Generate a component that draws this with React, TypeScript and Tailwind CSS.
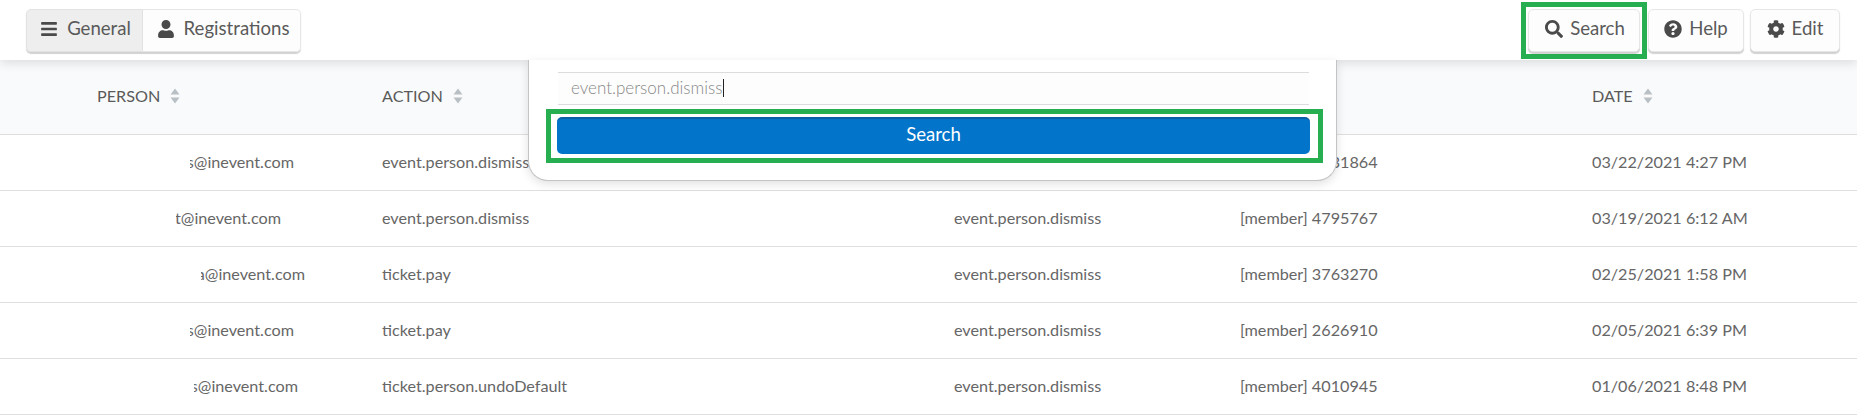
import { FaBars, FaUser, FaSearch, FaQuestionCircle, FaCog } from "react-icons/fa"

const rows = [
  { email: "s@inevent.com", clip: "w-[104px] ml-[190px]", action: "event.person.dismiss", target: "event.person.dismiss", member: "[member] 4831864", date: "03/22/2021 4:27 PM" },
  { email: "t@inevent.com", clip: "w-[105px] ml-[176px]", action: "event.person.dismiss", target: "event.person.dismiss", member: "[member] 4795767", date: "03/19/2021 6:12 AM" },
  { email: "a@inevent.com", clip: "w-[104px] ml-[201px]", action: "ticket.pay", target: "event.person.dismiss", member: "[member] 3763270", date: "02/25/2021 1:58 PM" },
  { email: "s@inevent.com", clip: "w-[104px] ml-[190px]", action: "ticket.pay", target: "event.person.dismiss", member: "[member] 2626910", date: "02/05/2021 6:39 PM" },
  { email: "s@inevent.com", clip: "w-[104px] ml-[194px]", action: "ticket.person.undoDefault", target: "event.person.dismiss", member: "[member] 4010945", date: "01/06/2021 8:48 PM" },
]

function SortIcon() {
  return (
    <svg viewBox="0 0 10 16" className="ml-[10px] h-[16px] w-[10px]" fill="#b9c0c5">
      <path d="M5 0.5 L9.5 6.5 H0.5 Z" />
      <path d="M5 15.5 L9.5 9.5 H0.5 Z" />
    </svg>
  )
}

function HeadCell({ label, className }: { label: string; className: string }) {
  return (
    <div className={`flex items-center ${className}`}>
      <span>{label}</span>
      <SortIcon />
    </div>
  )
}

function ToolButton({ icon, label, className }: { icon: React.ReactNode; label: string; className: string }) {
  return (
    <button className={`flex h-[43px] items-center justify-center gap-[7px] rounded-[5px] border border-[#e6e6e6] bg-[#fdfdfd] pb-[2px] text-[18.6px] text-[#5a5a5a] shadow-[0_2px_1px_rgba(0,0,0,0.18)] ${className}`}>
      {icon}
      {label}
    </button>
  )
}

export default function App() {
  return (
    <div className="relative h-[416px] w-[1857px] overflow-hidden bg-white font-['Lato',sans-serif] text-[16.2px] text-[#666]">
      {/* Top bar */}
      <header className="relative z-10 flex h-[60px] items-center justify-between bg-white pl-[26px] pr-[17px] shadow-[0_3px_10px_rgba(0,0,0,0.12)]">
        <div className="flex h-[43px] rounded-[5px] text-[18.6px] text-[#5a5a5a] shadow-[0_2px_1px_rgba(0,0,0,0.18)]">
          <div className="flex w-[117px] items-center justify-center gap-[9px] rounded-l-[5px] border border-[#e2e2e2] bg-[#eeeeee] pb-[2px] pl-[2px]">
            <FaBars className="text-[18px] text-[#4a4a4a]" />
            General
          </div>
          <div className="flex w-[158px] items-center justify-center gap-[9px] rounded-r-[5px] border border-l-0 border-[#e6e6e6] bg-[#fdfdfd] pb-[2px] pl-[3px]">
            <FaUser className="text-[18px] text-[#4a4a4a]" />
            Registrations
          </div>
        </div>
        <div className="flex items-center">
          <div className="border-[5px] border-[#27ae50] p-[2px]">
            <ToolButton icon={<FaSearch className="text-[18px] text-[#4a4a4a]" />} label="Search" className="w-[112px] pl-[2px]" />
          </div>
          <ToolButton icon={<FaQuestionCircle className="text-[18px] text-[#4a4a4a]" />} label="Help" className="ml-[1px] w-[96px]" />
          <ToolButton icon={<FaCog className="text-[18px] text-[#4a4a4a]" />} label="Edit" className="ml-[6px] w-[90px]" />
        </div>
      </header>

      {/* Table */}
      <div className="flex h-[75px] items-center border-b border-[#dedede] bg-[#f9fafb] pb-[2px] text-[#5a5a5a]">
        <HeadCell label="PERSON" className="ml-[97px] w-[285px]" />
        <HeadCell label="ACTION" className="w-[857px]" />
        <HeadCell label="DATE" className="ml-[353px]" />
      </div>
      {rows.map((row) => (
        <div key={row.member} className="flex h-[56px] items-center border-b border-[#dedede] pb-[1px]">
          <div className="w-[382px]">
            <div className={`flex justify-end overflow-hidden whitespace-nowrap ${row.clip}`}>{row.email}</div>
          </div>
          <div className="w-[572px]">{row.action}</div>
          <div className="w-[286px]">{row.target}</div>
          <div className="w-[352px]">{row.member}</div>
          <div>{row.date}</div>
        </div>
      ))}

      {/* Search popover */}
      <div className="absolute left-[528px] top-[60px] z-20 h-[121px] w-[809px] rounded-b-[20px] border border-t-0 border-[#c4c4c4] bg-white pl-[17px] pr-[13px] pt-[12px] shadow-[0_3px_10px_rgba(0,0,0,0.12)]">
        <div className="ml-[12px] mr-[14px] flex h-[33px] items-center border-y border-[#dcdcdc] bg-[#fdfdfd] pb-[2px] pl-[13px] text-[17px] font-light text-[#888]">
          event.person.dismiss
          <span className="ml-px h-[18px] w-px bg-[#222]" />
        </div>
        <div className="mt-[4px] border-[5px] border-[#27ae50] pb-[4px] pl-[6px] pr-[8px] pt-[3px]">
          <button className="flex h-[37px] w-full items-center justify-center rounded-[5px] border-t-2 border-[#0a5fa5] bg-[#0275cb] pb-[3px] text-[18.6px] text-white">
            Search
          </button>
        </div>
      </div>
    </div>
  )
}
